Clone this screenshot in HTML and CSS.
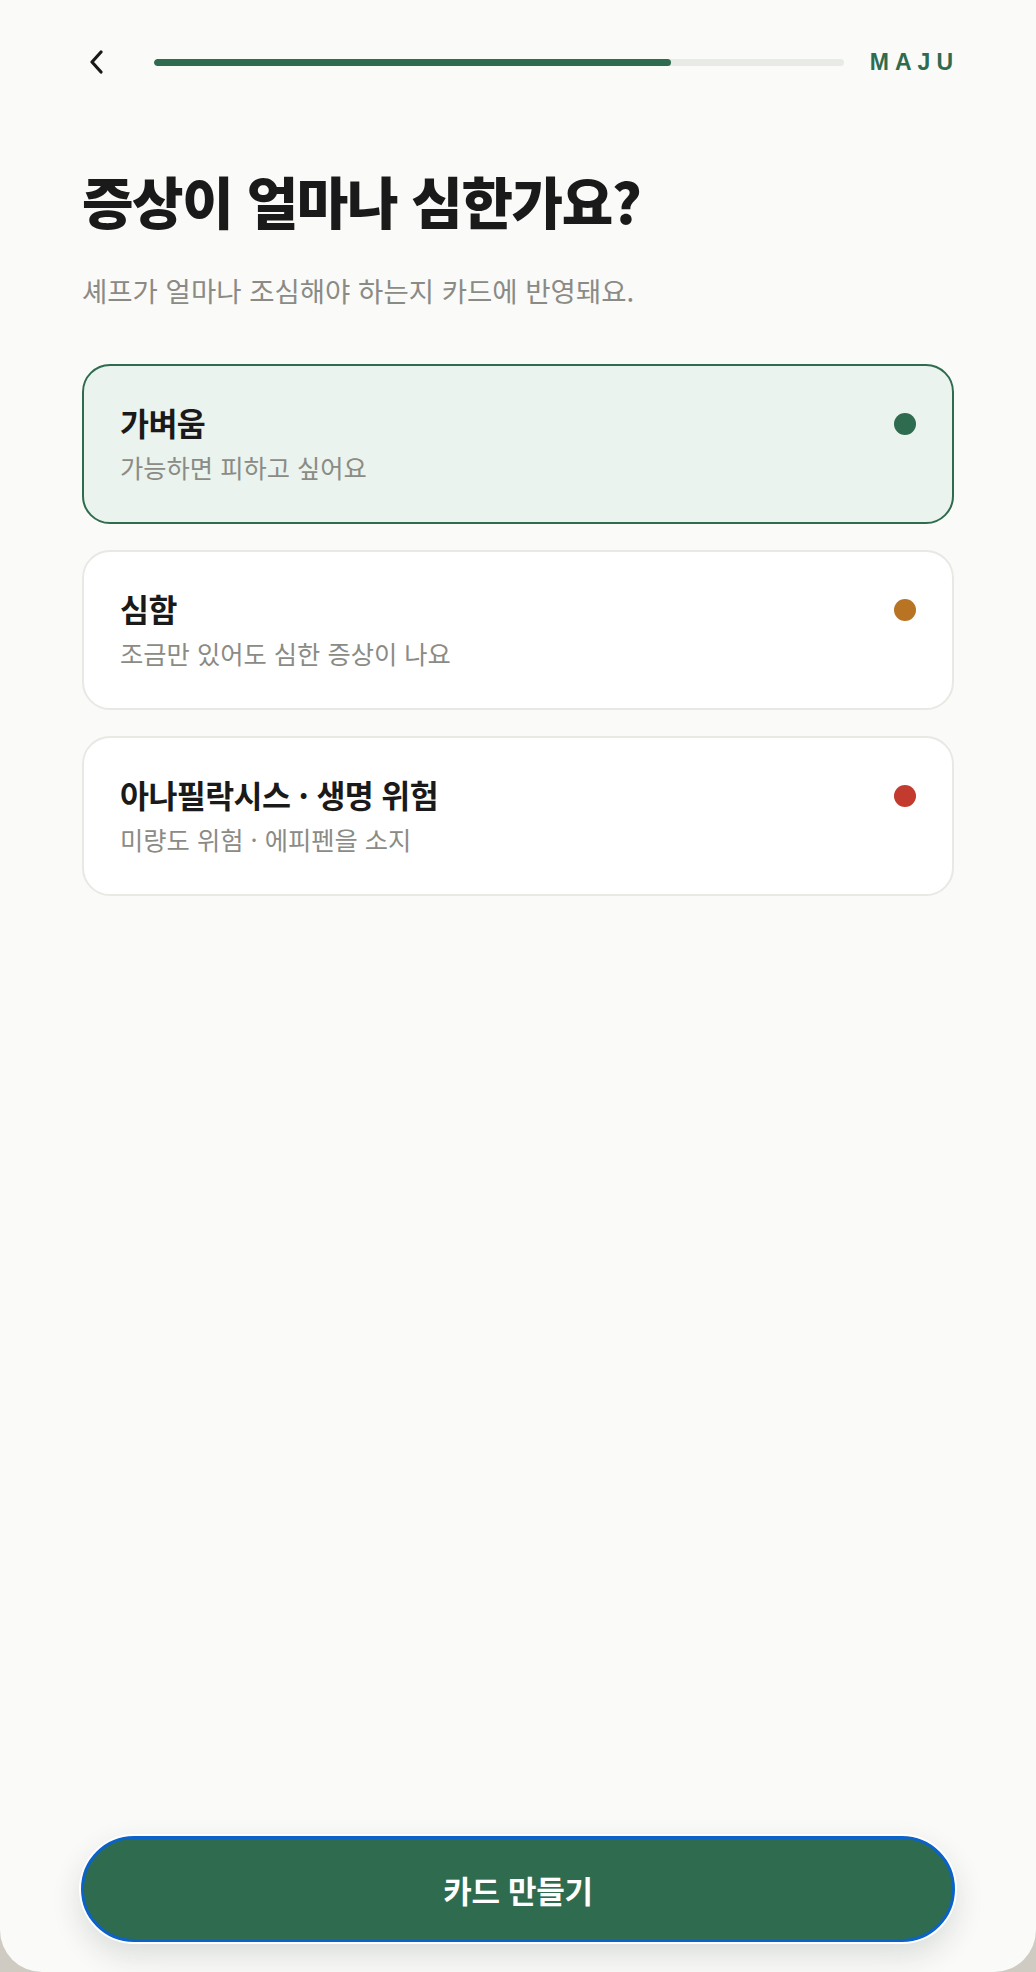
FILE: index.html
```html
<!DOCTYPE html>
<html lang="ko">
<head>
<meta charset="utf-8">
<title>MAJU</title>
<link rel="stylesheet" href="styles.css">
</head>
<body>
<div class="screen">
  <header class="topbar">
    <button class="back" aria-label="뒤로">
      <svg width="16" height="24" viewBox="0 0 16 24" fill="none" stroke="#1a1a1a" stroke-width="3.2" stroke-linecap="round" stroke-linejoin="round"><path d="M13 2 L4 12 L13 22"/></svg>
    </button>
    <div class="progress"><div class="progress-fill" style="width:75%"></div></div>
    <div class="brand">MAJU</div>
  </header>

  <main class="content">
    <h1 class="title">증상이 얼마나 심한가요?</h1>
    <p class="subtitle">셰프가 얼마나 조심해야 하는지 카드에 반영돼요.</p>

    <div class="options">
      <div class="option selected">
        <div class="option-row">
          <div class="option-title">가벼움</div>
          <span class="dot dot-green"></span>
        </div>
        <div class="option-desc">가능하면 피하고 싶어요</div>
      </div>
      <div class="option">
        <div class="option-row">
          <div class="option-title">심함</div>
          <span class="dot dot-orange"></span>
        </div>
        <div class="option-desc">조금만 있어도 심한 증상이 나요</div>
      </div>
      <div class="option">
        <div class="option-row">
          <div class="option-title">아나필락시스 · 생명 위험</div>
          <span class="dot dot-red"></span>
        </div>
        <div class="option-desc">미량도 위험 · 에피펜을 소지</div>
      </div>
    </div>
  </main>

  <footer class="footer">
    <button class="cta">카드 만들기</button>
  </footer>
</div>
</body>
</html>
```

FILE: styles.css
```css
* { box-sizing: border-box; }

html, body {
  margin: 0;
  padding: 0;
}

body {
  background: #cfcbc3;
  font-family: "Noto Sans CJK KR", "Noto Sans", sans-serif;
  color: #1a1a1a;
}

.screen {
  height: 1972px;
  background: #fafaf8;
  border-radius: 0 0 42px 42px;
  display: flex;
  flex-direction: column;
  overflow: hidden;
}

.topbar {
  height: 124px;
  display: flex;
  align-items: center;
  padding: 0 77px 0 82px;
}

.back {
  width: 28px;
  height: 40px;
  padding: 0;
  border: 0;
  background: none;
  display: flex;
  align-items: center;
  justify-content: center;
  margin-right: 44px;
}

.progress {
  flex: 1;
  height: 7px;
  border-radius: 4px;
  background: #e8eae6;
  overflow: hidden;
}

.progress-fill {
  height: 100%;
  background: #2f6b4f;
  border-radius: 4px;
}

.brand {
  margin-left: 26px;
  font-family: "Liberation Sans", Arial, sans-serif;
  font-weight: 700;
  font-size: 23px;
  letter-spacing: 6px;
  color: #2f6b4f;
}

.content {
  padding: 0 82px;
  flex: 1;
}

.title {
  margin: 42px 0 0;
  font-size: 56px;
  line-height: 68px;
  font-weight: 900;
  letter-spacing: -1.4px;
  color: #1a1a1a;
}

.subtitle {
  margin: 38px 0 0;
  font-size: 27.5px;
  line-height: 36px;
  font-weight: 400;
  color: #8b8b86;
  letter-spacing: 0;
}

.options {
  margin-top: 56px;
  display: flex;
  flex-direction: column;
  gap: 26px;
}

.option {
  background: #ffffff;
  border: 2px solid #e8e8e4;
  border-radius: 28px;
  padding: 37px 36px 39px;
  display: flex;
  flex-direction: column;
  gap: 10px;
}

.option.selected {
  background: #eaf3ed;
  border-color: #2f6b4f;
}

.option-row {
  display: flex;
  align-items: center;
  justify-content: space-between;
}

.option-title {
  font-size: 31.5px;
  line-height: 38px;
  font-weight: 700;
  letter-spacing: -0.6px;
  color: #1a1a1a;
}

.option-desc {
  font-size: 25.3px;
  line-height: 32px;
  font-weight: 400;
  color: #8b8b86;
}

.dot {
  width: 22px;
  height: 22px;
  border-radius: 50%;
  margin-top: 4px;
  flex: none;
}

.dot-green { background: #2f6b4f; }
.dot-orange { background: #b87423; }
.dot-red { background: #c23b2e; }

.footer {
  padding: 0 81px 30px;
}

.cta {
  width: 100%;
  height: 106px;
  border: 3px solid #0b63c9;
  border-radius: 53px;
  background: #2f6b4f;
  color: #ffffff;
  font-family: "Noto Sans CJK KR", "Noto Sans", sans-serif;
  font-size: 31px;
  font-weight: 700;
  letter-spacing: -0.3px;
  box-shadow: 0 0 0 2px #ffffff, 0 12px 30px rgba(40, 60, 50, 0.16);
}
```
